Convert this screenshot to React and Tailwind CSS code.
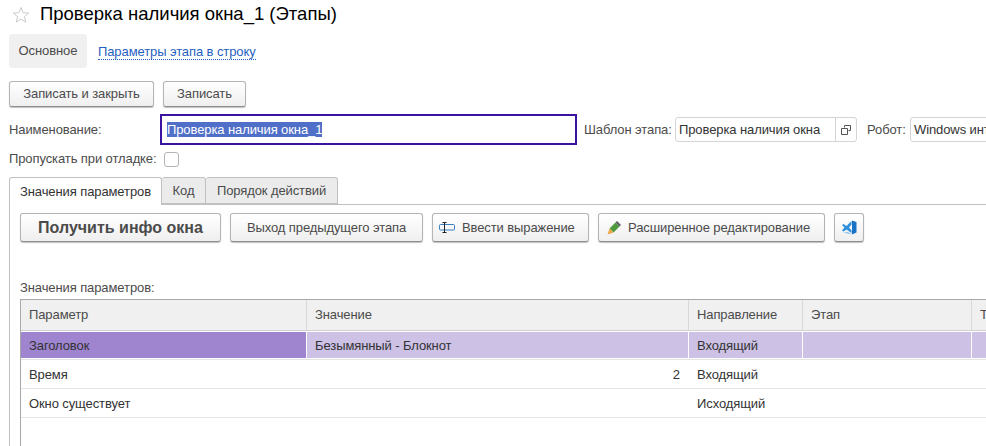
import React from "react";

function Btn({ className = "", children }) {
  return (
    <button className={"flex items-center justify-center shrink-0 whitespace-nowrap rounded-[3px] border border-[#b4b4b4] border-b-[#8f8f8f] bg-gradient-to-b from-white to-[#efefef] shadow-[0_1px_1px_rgba(0,0,0,0.25)] text-[#4b4b4b] " + className}>
      {children}
    </button>
  );
}

function StarIcon() {
  return (
    <svg width="18" height="18" viewBox="0 0 18 18" fill="none" stroke="#cacaca" strokeWidth="1">
      <path d="M9 1.5l2.1 5.2 5.5.4-4.2 3.6 1.4 5.4L9 13.2l-4.8 2.9 1.4-5.4-4.2-3.6 5.5-.4z" />
    </svg>
  );
}

function InputIcon() {
  return (
    <svg width="16" height="11" viewBox="0 0 16 11" fill="none">
      <rect x="0.5" y="2.5" width="15" height="5.5" rx="1" stroke="#3b7fc4" />
      <path d="M5.5 0.5v10M3.5 0.5h4M3.5 10.5h4" stroke="#222" />
    </svg>
  );
}

function PencilIcon() {
  return (
    <svg width="14" height="14" viewBox="0 0 14 14">
      <path d="M2.5 7.5L8.5 1.5L12.5 5.5L6.5 11.5Z" fill="#4f9a3c" />
      <path d="M8.5 1.5L10 0L14 4L12.5 5.5Z" fill="#5c5c5c" />
      <path d="M2.5 7.5L6.5 11.5L0.5 13.5Z" fill="#eea64a" />
    </svg>
  );
}

function VsCodeIcon() {
  return (
    <svg width="15" height="15" viewBox="0 0 15 15">
      <path d="M0 5L1.5 4L4.5 6L9.5 1V4.5L7 7.5L9.5 10.5V13L4.5 9.5L1.5 11.5L0 10.5L2.5 7.5Z" fill="#2f8fdf" />
      <path d="M10 0.5L14.5 2V12.5L10 14.5Z" fill="#1a72c6" />
      <path d="M1 12.5L6 12L10 14.5Z" fill="#8cc4f0" />
    </svg>
  );
}

function CopyIcon() {
  return (
    <svg width="10" height="10" viewBox="0 0 10 10" fill="none" stroke="#555">
      <path d="M3.5 2.5V.5h6v5h-2M.5 3.5h6v6h-6z" />
    </svg>
  );
}

const cols = "grid grid-cols-[285px_1px_381px_1px_113px_1px_168px_1px_60px]";

function Row({ name, value, dir, step, last, className = "", first = "", cell = "", line = "" }) {
  return (
    <div className={cols + " text-[#333] " + className}>
      <div className={"flex items-center pl-[8px] " + first}>{name}</div>
      <div className={line} />
      <div className={"flex items-center pl-[8px] pr-[8px] " + cell + (typeof value === "number" ? " justify-end" : "")}>{value}</div>
      <div className={line} />
      <div className={"flex items-center pl-[8px] " + cell}>{dir}</div>
      <div className={line} />
      <div className={"flex items-center pl-[8px] " + cell}>{step}</div>
      <div className={line} />
      <div className={"flex items-center pl-[8px] " + cell}>{last}</div>
    </div>
  );
}

export default function App() {
  return (
    <div className="w-[986px] h-[446px] overflow-hidden bg-white font-['Liberation_Sans',Arial,sans-serif] text-[13px] tracking-[-0.1px] text-[#4b4b4b]">
      {/* Title */}
      <div className="flex items-center h-[30px] pl-[12px]">
        <StarIcon />
        <h1 className="ml-[10px] -mt-[2px] text-[18.5px] tracking-normal text-black whitespace-nowrap">Проверка наличия окна_1 (Этапы)</h1>
      </div>

      {/* Nav */}
      <div className="flex items-center mt-[4px] ml-[9px] h-[34px]">
        <div className="flex items-center justify-center w-[78px] h-full rounded-[3px] bg-[#f0f0f0]">Основное</div>
        <a className="ml-[11px] mt-[2px] text-[#1f5fbf] border-b border-dotted border-[#1f5fbf] leading-[14px]">Параметры этапа в строку</a>
      </div>

      {/* Write buttons */}
      <div className="flex gap-[9px] mt-[13px] ml-[9px]">
        <Btn className="w-[145px] h-[26px]">Записать и закрыть</Btn>
        <Btn className="w-[83px] h-[26px]">Записать</Btn>
      </div>

      {/* Name row */}
      <div className="flex items-center mt-[7px] ml-[9px] h-[31px] whitespace-nowrap">
        <div className="w-[151px] shrink-0">Наименование:</div>
        <div className="flex items-center shrink-0 w-[417px] h-full border-2 border-[#3a14a0] pl-[5px] text-white">
          <span className="bg-[#4f6fc8] leading-[15px]">Проверка наличия окна_1</span>
        </div>
        <div className="ml-[7px] w-[91px] shrink-0">Шаблон этапа:</div>
        <div className="flex items-center shrink-0 w-[182px] h-[25px] border border-[#d4d4d4] rounded-[3px] text-[#333]">
          <div className="flex-1 pl-[3px]">Проверка наличия окна</div>
          <div className="flex items-center justify-center w-[21px] h-full border-l border-[#d4d4d4]"><CopyIcon /></div>
        </div>
        <div className="ml-[10px] w-[43px] shrink-0">Робот:</div>
        <div className="flex items-center shrink-0 w-[200px] h-[25px] border border-[#d4d4d4] rounded-[3px] pl-[3px] text-[#333]">Windows интерфейс</div>
      </div>

      {/* Skip checkbox */}
      <div className="flex items-center mt-[6px] ml-[9px] h-[16px]">
        <div className="w-[155px] shrink-0 whitespace-nowrap">Пропускать при отладке:</div>
        <div className="w-[15px] h-[15px] border border-[#b4b4b4] rounded-[3px]" />
      </div>

      {/* Tabs */}
      <div className="flex mt-[10px] ml-[9px] h-[28px]">
        <div className="flex items-center justify-center w-[153px] h-[28px] border border-b-0 border-[#c0c0c0] rounded-t-[3px] bg-white relative z-10 text-[#333]">Значения параметров</div>
        <div className="flex items-center justify-center w-[44px] h-[27px] border border-l-0 border-[#c0c0c0] rounded-t-[3px] bg-[#ebebeb]">Код</div>
        <div className="flex items-center justify-center w-[132px] h-[27px] border border-l-0 border-[#c0c0c0] rounded-t-[3px] bg-[#ebebeb]">Порядок действий</div>
      </div>

      {/* Tab panel */}
      <div className="ml-[9px] -mt-px border-t border-l border-[#c0c0c0] h-[300px] pl-[10px] pt-[8px]">
        <div className="flex gap-[9px]">
          <Btn className="w-[201px] h-[29px] text-[16px] tracking-normal font-bold">Получить инфо окна</Btn>
          <Btn className="w-[193px] h-[29px]">Выход предыдущего этапа</Btn>
          <Btn className="w-[157px] h-[29px] justify-start pl-[6px] gap-[7px]"><InputIcon />Ввести выражение</Btn>
          <Btn className="w-[227px] h-[29px] justify-start pl-[8px] gap-[7px]"><PencilIcon />Расширенное редактирование</Btn>
          <Btn className="w-[30px] h-[29px]"><VsCodeIcon /></Btn>
        </div>
        <div className="mt-[39px] h-[14px] leading-[14px]">Значения параметров:</div>
        <div className="mt-[4px] w-[1000px] h-[200px] border-t border-l border-[#a8a8a8]">
          <Row name="Параметр" value="Значение" dir="Направление" step="Этап" last="Т" line="bg-[#d8d8d8]" className="h-[31px] bg-[#f0f0f0] !text-[#4b4b4b] border-b border-[#d0d0d0]" />
          <Row name="Заголовок" value="Безымянный - Блокнот" dir="Входящий" line="bg-white" className="h-[28px] mt-px pb-px border-b border-[#e4e4e4] [&>div]:pt-[2px]" first="bg-[#9f85d0]" cell="bg-[#cdc1e6]" />
          <Row name="Время" value={2} dir="Входящий" className="h-[29px] border-b border-[#e4e4e4] [&>div]:pt-[2px]" />
          <Row name="Окно существует" dir="Исходящий" className="h-[29px] border-b border-[#e4e4e4] [&>div]:pt-[2px]" />
        </div>
      </div>
    </div>
  );
}
